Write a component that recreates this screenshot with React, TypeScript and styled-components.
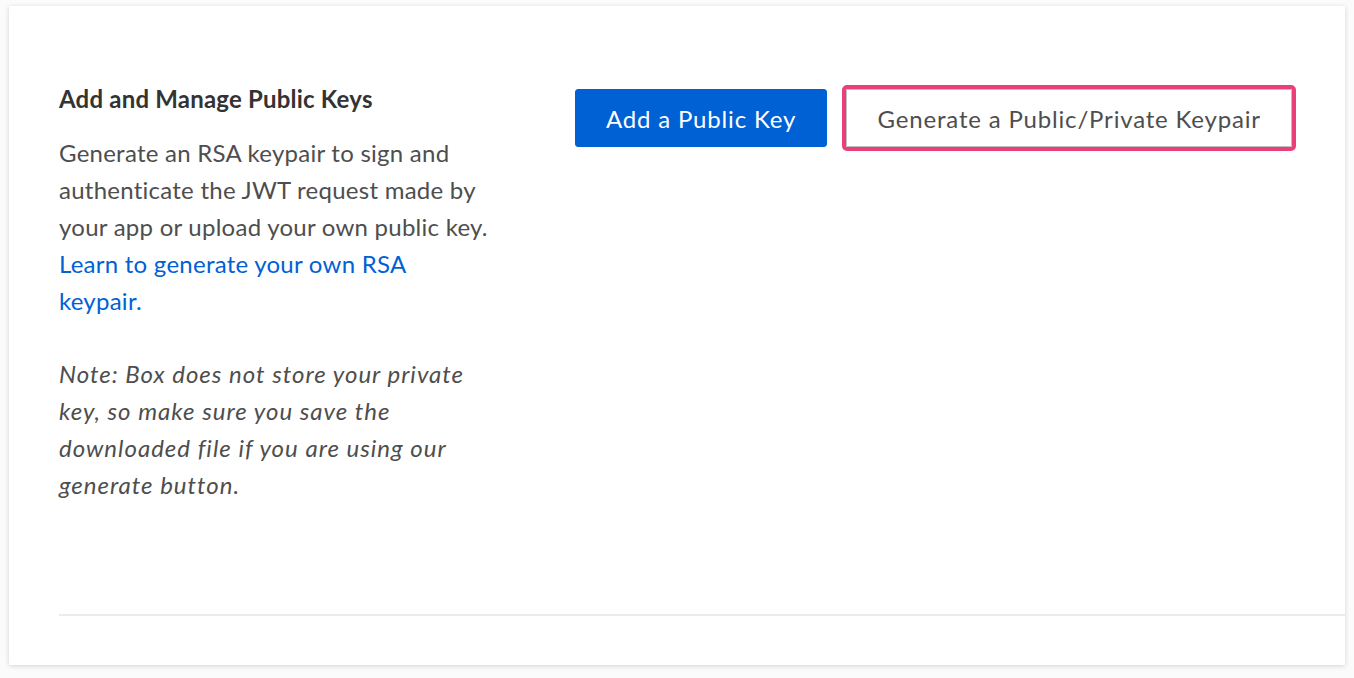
import React from "react";
import styled, { createGlobalStyle } from "styled-components";

const Global = createGlobalStyle`
  html, body { margin: 0; padding: 0; background: #fbfbfb; }
  body { font-family: Lato, "Noto Sans", sans-serif; }
  * { box-sizing: border-box; }
`;

const Page = styled.div`
  padding: 6px 9px 0 9px;
  width: 1354px;
  height: 678px;
  background: #fbfbfb;
`;

const Card = styled.section`
  background: #fff;
  height: 659px;
  box-shadow: 0 1px 5px rgba(0, 0, 0, 0.16);
  display: flex;
  flex-direction: column;
  padding-left: 50px;
`;

const Row = styled.div`
  display: flex;
  align-items: flex-start;
  padding-top: 76px;
  height: 608px;
`;

const Info = styled.div`
  width: 432px;
  margin-right: 84px;
  color: #4e4e4e;
  font-size: 24px;
  letter-spacing: 0.25px;
  line-height: 37px;
`;

const Title = styled.h3`
  margin: 0 0 18px 0;
  font-size: 24px;
  font-weight: 700;
  letter-spacing: 0.2px;
  color: #333;
  line-height: 34px;
`;

const Para = styled.p<{ $italic?: boolean }>`
  margin: 0 0 36px 0;
  font-style: ${(p) => (p.$italic ? "italic" : "normal")};
  letter-spacing: ${(p) => (p.$italic ? "1px" : "0.25px")};
`;

const Link = styled.a`
  color: #0061d5;
  text-decoration: none;
`;

const Actions = styled.div`
  display: flex;
  align-items: center;
  gap: 19px;
  padding-top: 7px;
`;

const Button = styled.button<{ $primary?: boolean; $focused?: boolean }>`
  height: 58px;
  padding: ${(p) => (p.$primary ? "0 30px" : "0 30.5px")};
  font-family: Lato, "Noto Sans", sans-serif;
  font-size: 24px;
  letter-spacing: 0.82px;
  border-radius: ${(p) => (p.$primary ? "3px" : "1px")};
  cursor: pointer;
  background: ${(p) => (p.$primary ? "#0061d5" : "#fff")};
  color: ${(p) => (p.$primary ? "#fff" : "#4e4e4e")};
  border: 1px solid ${(p) => (p.$primary ? "#0061d5" : "#bfbfbf")};
  outline: ${(p) => (p.$focused ? "4px solid #e9407b" : "none")};
  outline-offset: 0;
`;

const Divider = styled.hr`
  margin: 0;
  border: none;
  border-top: 2px solid #ebebeb;
`;

export default function App() {
  return (
    <>
      <Global />
      <Page>
        <Card>
          <Row>
            <Info>
              <Title>Add and Manage Public Keys</Title>
              <Para>
                Generate an RSA keypair to sign and authenticate the JWT request made by
                your app or upload your own public key.{" "}
                <Link href="#">Learn to generate your own RSA keypair.</Link>
              </Para>
              <Para $italic>
                Note: Box does not store your private key, so make sure you save the
                downloaded file if you are using our generate button.
              </Para>
            </Info>
            <Actions>
              <Button $primary>Add a Public Key</Button>
              <Button $focused>Generate a Public/Private Keypair</Button>
            </Actions>
          </Row>
          <Divider />
        </Card>
      </Page>
    </>
  );
}
